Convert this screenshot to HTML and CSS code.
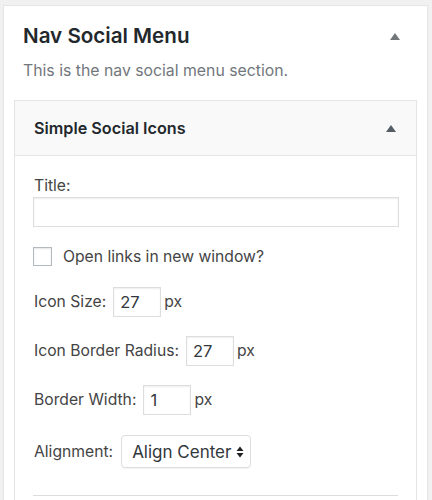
FILE: index.html
```html
<!DOCTYPE html>
<html>
<head>
<meta charset="utf-8">
<link rel="stylesheet" href="styles.css">
</head>
<body>
<div class="panel">
  <div class="panel-head">
    <h2 class="panel-title">Nav Social Menu</h2>
    <span class="tri tri-outer"></span>
  </div>
  <p class="panel-desc">This is the nav social menu section.</p>
  <div class="widget">
    <div class="widget-head">
      <h3 class="widget-title">Simple Social Icons</h3>
      <span class="tri tri-inner"></span>
    </div>
    <div class="widget-body">
      <label class="lbl-block">Title:</label>
      <input class="text-wide" type="text">
      <div class="check-row">
        <span class="checkbox"></span>
        <span class="lbl">Open links in new window?</span>
      </div>
      <div class="row row-size">
        <span class="lbl">Icon Size:</span>
        <span class="num">27</span>
        <span class="unit">px</span>
      </div>
      <div class="row row-radius">
        <span class="lbl">Icon Border Radius:</span>
        <span class="num">27</span>
        <span class="unit">px</span>
      </div>
      <div class="row row-border">
        <span class="lbl">Border Width:</span>
        <span class="num">1</span>
        <span class="unit">px</span>
      </div>
      <div class="row row-align">
        <span class="lbl">Alignment:</span>
        <span class="select">Align Center
          <svg class="arrows" width="8" height="12" viewBox="0 0 8 12"><path d="M4 0.5 L7.5 5 L0.5 5 Z M4 11.5 L7.5 7 L0.5 7 Z" fill="#222"/></svg>
        </span>
      </div>
      <hr class="sep">
    </div>
  </div>
</div>
</body>
</html>
```
FILE: styles.css
```css
html, body {
  margin: 0;
  padding: 0;
}
body {
  background: #f1f1f1;
  font-family: Inter, "Noto Sans", sans-serif;
  color: #32373c;
  padding: 5px 4px 0 3px;
  height: 500px;
  box-sizing: border-box;
  overflow: hidden;
}
.panel {
  box-sizing: border-box;
  background: #fff;
  border: 1px solid #e5e5e5;
  border-bottom: none;
  padding: 18px 0 0 0;
  height: 495px;
  overflow: hidden;
}
.panel-head {
  display: flex;
  align-items: center;
  justify-content: space-between;
  padding: 0 27px 0 19px;
}
.panel-title {
  margin: 0;
  font-size: 20.6px;
  line-height: 24px;
  font-weight: 600;
  color: #23282d;
}
.tri {
  width: 0;
  height: 0;
  border-left: 5px solid transparent;
  border-right: 5px solid transparent;
  border-bottom: 7px solid #72777c;
}
.panel-desc {
  margin: 13px 0 0 0;
  padding: 0 19px;
  font-size: 15.8px;
  line-height: 20px;
  color: #72777c;
}
.widget {
  margin: 19px 10px 0 10px;
  border: 1px solid #e5e5e5;
  border-bottom: none;
  height: 400px;
}
.widget-head {
  height: 54px;
  background: #f9f9f9;
  border-bottom: 1px solid #e5e5e5;
  display: flex;
  align-items: center;
  justify-content: space-between;
  padding: 0 20px 0 19px;
}
.widget-title {
  margin: 0;
  font-size: 16.2px;
  font-weight: 600;
  color: #23282d;
}
.tri-inner {
  border-bottom-color: #555d66;
}
.widget-body {
  padding: 20px 18px 0 18px;
  font-size: 15.7px;
  line-height: 20px;
  color: #444;
}
.lbl-block {
  display: block;
  padding-left: 1px;
}
.text-wide {
  display: block;
  box-sizing: border-box;
  width: 366px;
  height: 30px;
  margin: 1px 0 0 0;
  border: 1px solid #ddd;
  box-shadow: inset 0 1px 2px rgba(0,0,0,.07);
  background: #fff;
}
.check-row {
  display: flex;
  align-items: center;
  margin-top: 20px;
  height: 19px;
}
.checkbox {
  width: 17px;
  height: 17px;
  border: 1px solid #b4b9be;
  box-shadow: inset 0 1px 2px rgba(0,0,0,.1);
  margin-right: 11px;
}
.row {
  display: flex;
  align-items: center;
  margin-top: 19px;
  height: 30px;
}
.row-size { margin-top: 21px; }
.row .lbl { padding-left: 1px; }
.num {
  box-sizing: border-box;
  width: 48px;
  height: 30px;
  margin-left: 7px;
  border: 1px solid #ddd;
  box-shadow: inset 0 1px 2px rgba(0,0,0,.07);
  padding: 4px 6px;
  font-size: 16.5px;
  line-height: 20px;
  color: #32373c;
}
.unit {
  margin-left: 3px;
}
.row-align {
  height: 33px;
  margin-top: 20px;
}
.select {
  box-sizing: border-box;
  height: 33px;
  margin-left: 8px;
  border: 1px solid #ddd;
  border-radius: 4px;
  box-shadow: 0 1px 1px rgba(0,0,0,.05);
  display: flex;
  align-items: center;
  padding: 0 6px 0 10px;
  font-size: 17px;
  color: #32373c;
  gap: 5px;
}
.sep {
  margin: 27px 0 0 0;
  border: none;
  border-top: 1px solid #ddd;
  height: 0;
}
```
